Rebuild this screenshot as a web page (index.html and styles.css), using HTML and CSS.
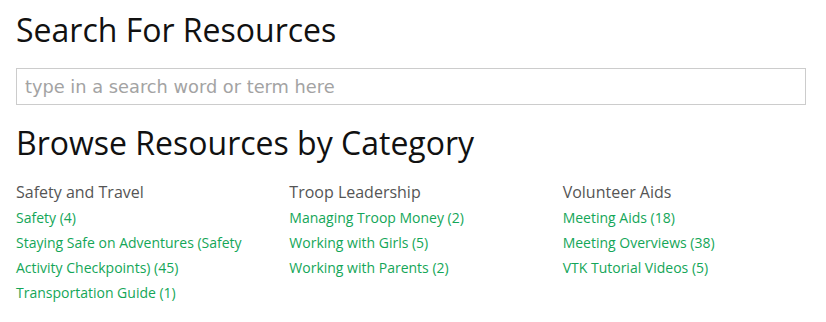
FILE: index.html
```
<!DOCTYPE html>
<html lang="en">
<head>
  <meta charset="UTF-8">
  <title>Resources</title>
  <link rel="stylesheet" href="styles.css">
</head>
<body>
  <div class="resources">
    <h1 class="title">Search For Resources</h1>
    <input class="search" type="text" placeholder="type in a search word or term here">

    <h2 class="title">Browse Resources by Category</h2>

    <div class="categories">
      <div class="category">
        <h3>Safety and Travel</h3>
        <a href="#">Safety (4)</a>
        <a href="#">Staying Safe on Adventures (Safety Activity Checkpoints) (45)</a>
        <a href="#">Transportation Guide (1)</a>
      </div>
      <div class="category">
        <h3>Troop Leadership</h3>
        <a href="#">Managing Troop Money (2)</a>
        <a href="#">Working with Girls (5)</a>
        <a href="#">Working with Parents (2)</a>
      </div>
      <div class="category">
        <h3>Volunteer Aids</h3>
        <a href="#">Meeting Aids (18)</a>
        <a href="#">Meeting Overviews (38)</a>
        <a href="#">VTK Tutorial Videos (5)</a>
      </div>
    </div>
  </div>
</body>
</html>
```

FILE: styles.css
```
* {
  margin: 0;
  padding: 0;
  box-sizing: border-box;
  font-family: "Open Sans", sans-serif;
}

body {
  background: #fff;
}

.resources {
  width: 822px;
  padding: 8px 16px;
}

.title {
  font-size: 32px;
  font-weight: normal;
  color: #111;
  line-height: 44px;
}

.search {
  display: block;
  width: 790px;
  height: 37px;
  margin: 16px 0;
  padding: 0 8px;
  border: 1px solid #ccc;
  font-family: "DejaVu Sans", Verdana, sans-serif;
  font-size: 17.8px;
  color: #333;
  outline: none;
}

.search::placeholder {
  color: #a3a3a3;
}

/* Categories */
.categories {
  display: grid;
  grid-template-columns: repeat(3, 1fr);
  gap: 30px;
  margin-top: 14px;
}

.category h3 {
  font-size: 16px;
  font-weight: normal;
  color: #555;
  line-height: 26px;
}

.category a {
  display: block;
  font-size: 14px;
  line-height: 25px;
  color: #14a658;
  text-decoration: none;
}

.category a:hover {
  text-decoration: underline;
}
```
